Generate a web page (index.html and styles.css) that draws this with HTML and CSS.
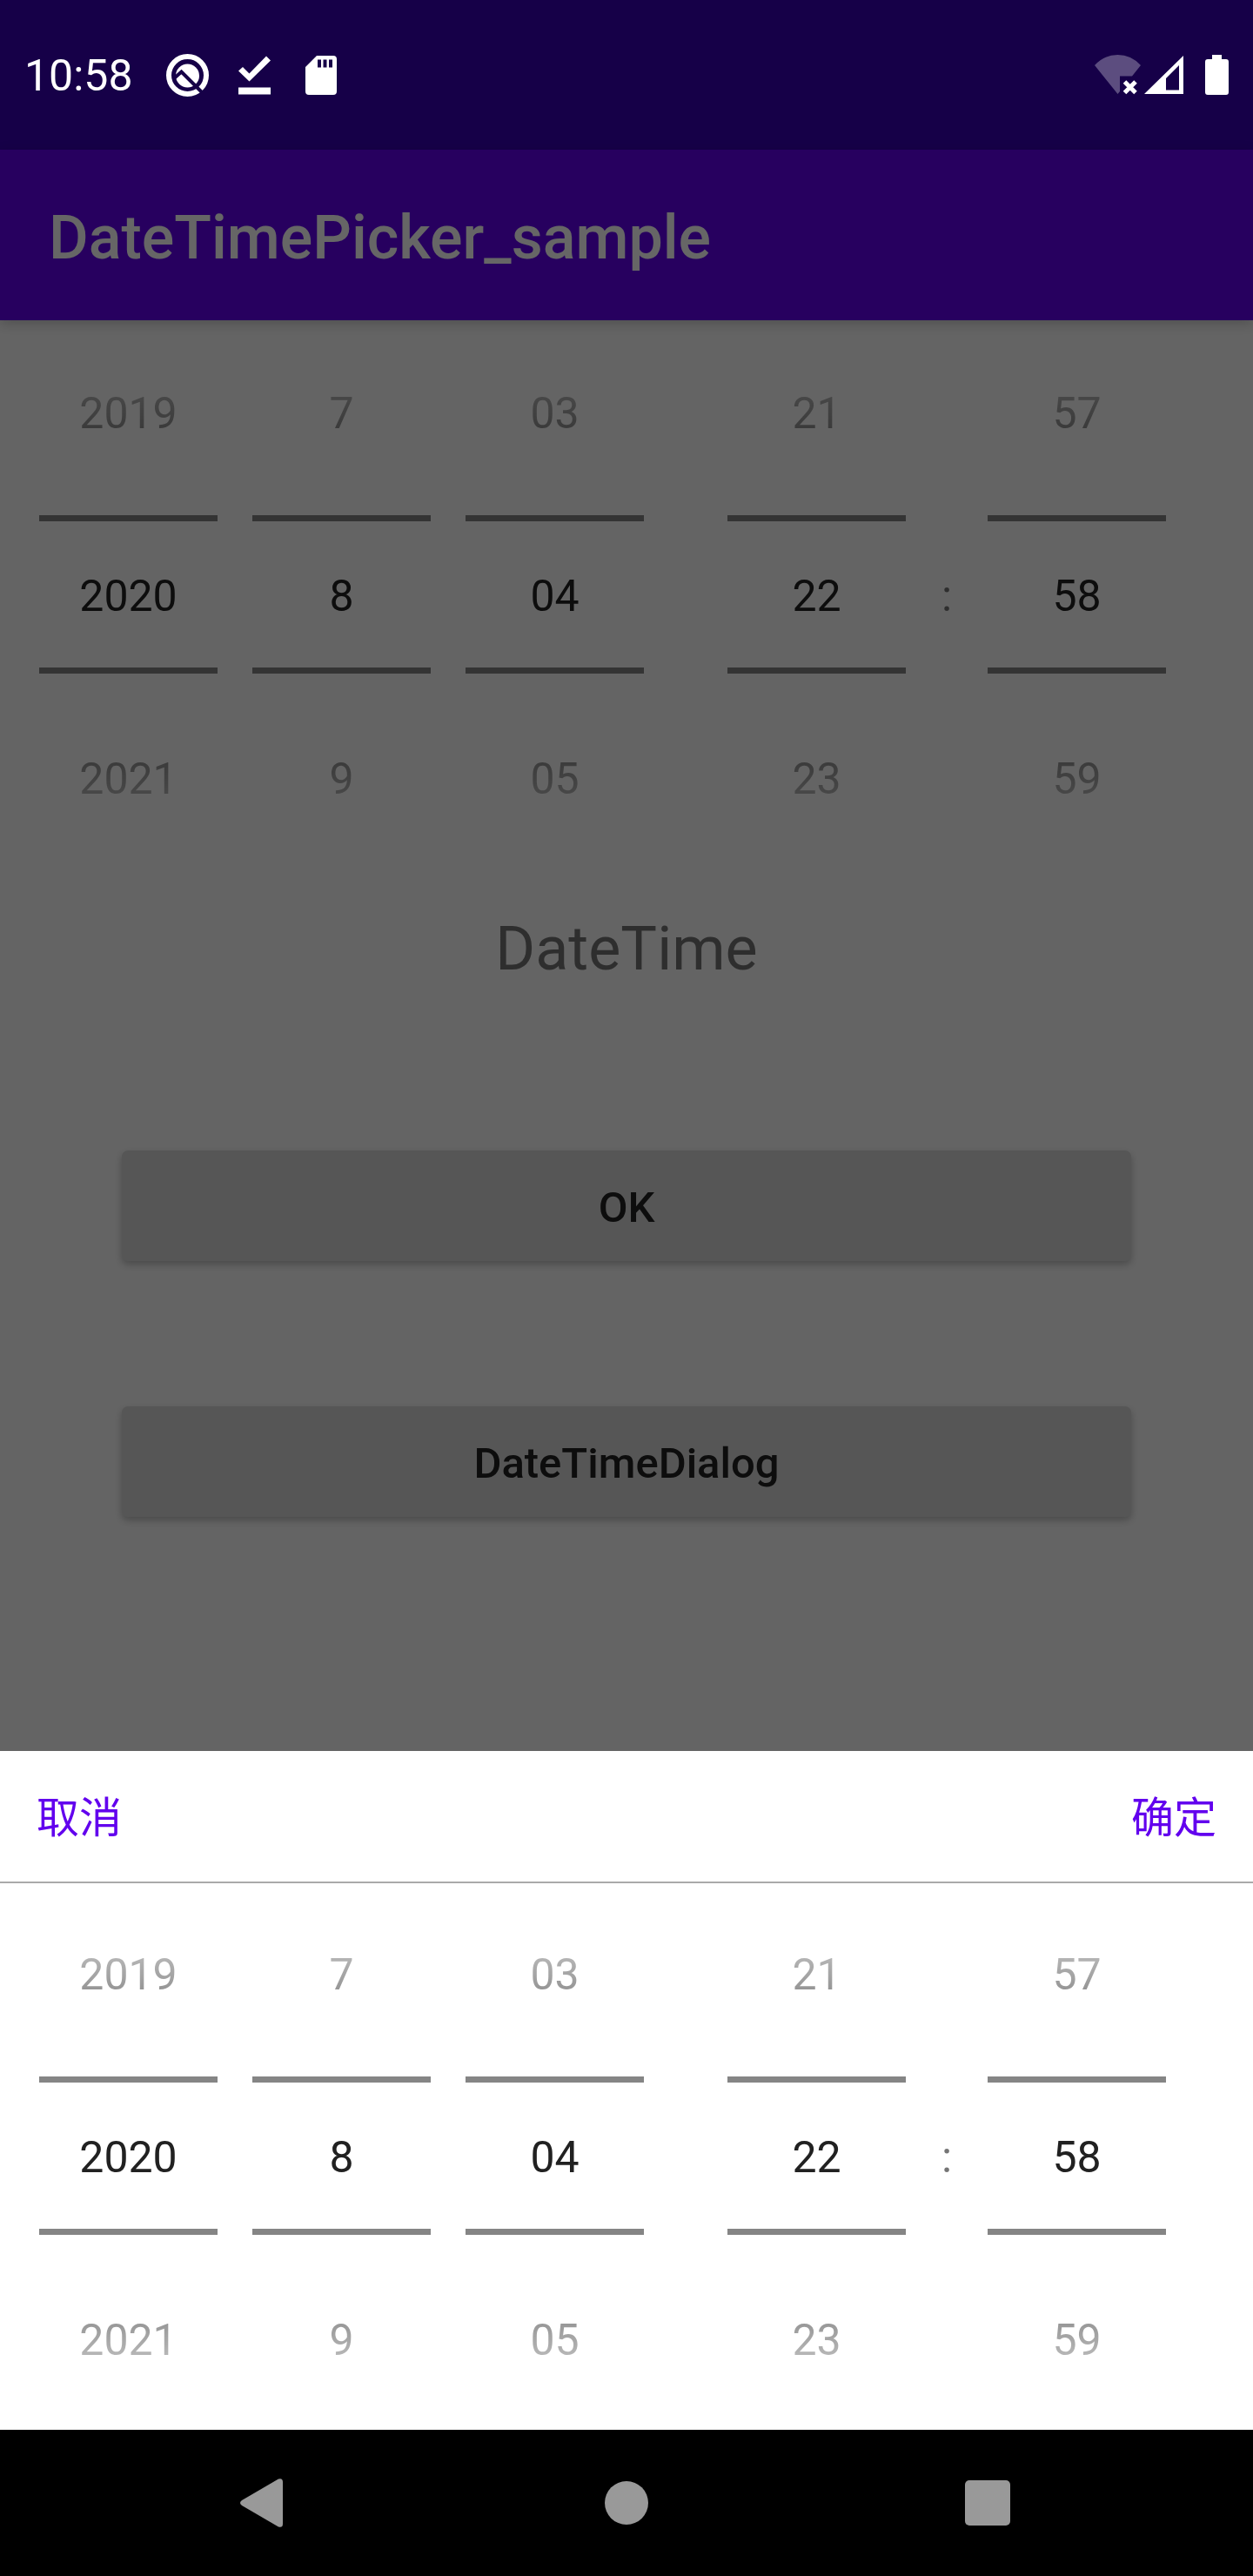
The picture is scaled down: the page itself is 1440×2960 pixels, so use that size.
FILE: index.html
```html
<!DOCTYPE html>
<html lang="zh-CN">
<head>
<meta charset="utf-8">
<meta name="viewport" content="width=device-width, initial-scale=1">
<title>DateTimePicker_sample</title>
<link rel="stylesheet" href="styles.css">
</head>
<body>
<header class="status">
  <time class="status-time">10:58</time>
  <div class="status-left">
    <svg class="icon-note" viewBox="0 0 49 50" aria-hidden="true">
      <circle cx="24.500" cy="24.500" r="21.500" fill="none" stroke="#fff" stroke-width="6"/>
      <circle cx="24.500" cy="25" r="13.500" fill="#fff"/>
      <path d="M8 29 L17.500 20.500 L41 44" fill="none" stroke="#160048" stroke-width="4"/>
    </svg>
    <svg class="icon-note" viewBox="0 0 49 50" aria-hidden="true">
      <path d="M6 38.500h37v8H6zM11 15l7.500 7.500L38 2.500l5 5L18.500 31.500 6 19.500z" fill="#fff"/>
    </svg>
    <svg class="icon-note" viewBox="0 0 49 50" aria-hidden="true">
      <path fill-rule="evenodd" d="M19 2h19q4 0 4 4v37q0 4-4 4H10q-4 0-4-4V15zM20 6.500v9h4v-9zM26.500 6.500v9h4v-9zM33 6.500v9h4v-9z" fill="#fff"/>
    </svg>
  </div>
  <div class="status-right">
    <svg class="icon-wifi" viewBox="0 0 54 50" aria-hidden="true">
      <path d="M0 13Q11 1 26.500 1T53 13L43 25.500H29V43L26.500 46z" fill="#fff" fill-opacity=".3"/>
      <path d="M34.500 32l12.500 12.500M47 32L34.500 44.500" stroke="#fff" stroke-width="5"/>
    </svg>
    <svg class="icon-signal" viewBox="0 0 45 50" aria-hidden="true">
      <path fill-rule="evenodd" d="M0 46L45 2v44zM25 28v13.500h15V13z" fill="#fff"/>
    </svg>
    <svg class="icon-battery" viewBox="0 0 27 50" aria-hidden="true">
      <path d="M8 1h11v5h5q3 0 3 3v35q0 3-3 3H3q-3 0-3-3V9q0-3 3-3h5z" fill="#fff"/>
    </svg>
  </div>
</header>

<main class="screen">
  <div class="app-bar"><h1 class="app-title">DateTimePicker_sample</h1></div>
  <div class="picker">
    <div class="wheel year"><button class="step prev">2019</button><input class="value" aria-label="Year" value="2020"><button class="step next">2021</button></div>
    <div class="wheel month"><button class="step prev">7</button><input class="value" aria-label="Month" value="8"><button class="step next">9</button></div>
    <div class="wheel day"><button class="step prev">03</button><input class="value" aria-label="Day" value="04"><button class="step next">05</button></div>
    <div class="wheel hour"><button class="step prev">21</button><input class="value" aria-label="Hour" value="22"><button class="step next">23</button></div>
    <span class="colon">:</span>
    <div class="wheel minute"><button class="step prev">57</button><input class="value" aria-label="Minute" value="58"><button class="step next">59</button></div>
  </div>
  <p class="result">DateTime</p>
  <div class="actions">
    <button class="action">OK</button>
    <button class="action">DateTimeDialog</button>
  </div>
</main>

<section class="sheet" role="dialog" aria-label="DateTimeDialog">
  <div class="sheet-head">
    <button class="link">取消</button>
    <button class="link">确定</button>
  </div>
  <div class="picker">
    <div class="wheel year"><button class="step prev">2019</button><input class="value" aria-label="Year" value="2020"><button class="step next">2021</button></div>
    <div class="wheel month"><button class="step prev">7</button><input class="value" aria-label="Month" value="8"><button class="step next">9</button></div>
    <div class="wheel day"><button class="step prev">03</button><input class="value" aria-label="Day" value="04"><button class="step next">05</button></div>
    <div class="wheel hour"><button class="step prev">21</button><input class="value" aria-label="Hour" value="22"><button class="step next">23</button></div>
    <span class="colon">:</span>
    <div class="wheel minute"><button class="step prev">57</button><input class="value" aria-label="Minute" value="58"><button class="step next">59</button></div>
  </div>
</section>

<nav class="nav">
  <button class="nav-button" aria-label="Back"><svg class="nav-icon" viewBox="0 0 60 60" aria-hidden="true"><path d="M45 2.500Q50 1 50 6V54Q50 59 45 57.500L3 33Q-1 30 3 27z" fill="#999"/></svg></button>
  <button class="nav-button" aria-label="Home"><svg class="nav-icon" viewBox="0 0 60 60" aria-hidden="true"><circle cx="30" cy="30" r="25" fill="#999"/></svg></button>
  <button class="nav-button" aria-label="Recent apps"><svg class="nav-icon" viewBox="0 0 60 60" aria-hidden="true"><rect x="4" y="4" width="52" height="52" rx="5" fill="#999"/></svg></button>
</nav>
</body>
</html>
```
FILE: styles.css
```css
* {
  box-sizing: border-box;
}

body {
  margin: 0;
  min-height: 100vh;
  display: flex;
  flex-direction: column;
  background: #fff;
  color: #212121;
  font-family: Roboto, "Noto Sans CJK SC", sans-serif;
  font-size: 49px;
}

button,
input {
  margin: 0;
  padding: 0;
  border: 0;
  border-radius: 0;
  background: none;
  color: inherit;
  font: inherit;
}

svg {
  display: block;
}

/* Status bar */
.status {
  height: 172px;
  padding: 2px 28px 0;
  display: flex;
  align-items: center;
  background: #160048;
  color: #fff;
}

.status-time {
  font-size: 50px;
}

.status-left {
  display: flex;
  gap: 28px;
  margin-left: 38px;
}

.status-right {
  display: flex;
  margin-left: auto;
}

.icon-note {
  width: 49px;
  height: 50px;
}

.icon-wifi {
  width: 54px;
  height: 50px;
}

.icon-signal {
  width: 45px;
  height: 50px;
  margin: 0 25px 0 3px;
}

.icon-battery {
  width: 27px;
  height: 50px;
}

/* Main screen, dimmed while the sheet is open */
.screen {
  flex: 1;
  position: relative;
  background: #fafafa;
}

.screen::after {
  content: "";
  position: absolute;
  inset: 0;
  background: rgba(0, 0, 0, 0.6);
}

.app-bar {
  height: 196px;
  padding: 6px 56px 0;
  display: flex;
  align-items: center;
  background: #6200ee;
  color: #fff;
  box-shadow: 0 4px 14px rgba(0, 0, 0, 0.2);
}

.app-title {
  margin: 0;
  font-size: 70px;
  font-weight: 500;
}

/* Date and time wheels */
.picker {
  display: grid;
  grid-template-columns: 205fr 40fr 205fr 40fr 205fr 96fr 205fr 94fr 205fr;
  align-items: center;
  padding: 0 100px 0 45px;
  font-size: 50px;
}

.year { grid-column: 1; }
.month { grid-column: 3; }
.day { grid-column: 5; }
.hour { grid-column: 7; }
.colon { grid-column: 8; }
.minute { grid-column: 9; }

.wheel {
  display: flex;
  flex-direction: column;
  gap: 14px;
}

.step {
  height: 210px;
  padding-top: 4px;
}

.prev {
  -webkit-mask-image: linear-gradient(transparent, rgba(0, 0, 0, 0.8));
  mask-image: linear-gradient(transparent, rgba(0, 0, 0, 0.8));
}

.next {
  -webkit-mask-image: linear-gradient(rgba(0, 0, 0, 0.8), transparent);
  mask-image: linear-gradient(rgba(0, 0, 0, 0.8), transparent);
}

.value {
  width: 100%;
  height: 182px;
  padding-top: 4px;
  border: solid rgba(0, 0, 0, 0.48);
  border-width: 7px 0;
  text-align: center;
}

.colon {
  padding-top: 4px;
  color: rgba(0, 0, 0, 0.54);
  text-align: center;
}

.result {
  margin: 51px 0 0;
  color: rgba(0, 0, 0, 0.54);
  font-size: 70px;
  line-height: 82px;
  text-align: center;
}

.actions {
  display: flex;
  flex-direction: column;
  gap: 167px;
  margin: 191px 140px 0;
}

.action {
  height: 127px;
  padding-top: 3px;
  border-radius: 7px;
  background: #d6d7d7;
  font-weight: 500;
  box-shadow: 0 4px 8px rgba(0, 0, 0, 0.25);
}

/* Bottom sheet */
.sheet {
  background: #fff;
}

.sheet-head {
  height: 150px;
  padding: 0 42px 6px;
  display: flex;
  align-items: center;
  justify-content: space-between;
  color: #6200ee;
  box-shadow: 0 2px 0 #aaa;
}

/* System navigation */
.nav {
  height: 168px;
  padding: 0 98px;
  display: grid;
  grid-template-columns: repeat(3, 1fr);
  background: #000;
}

.nav-button {
  display: grid;
  place-items: center;
}

.nav-icon {
  width: 60px;
  height: 60px;
}
```
